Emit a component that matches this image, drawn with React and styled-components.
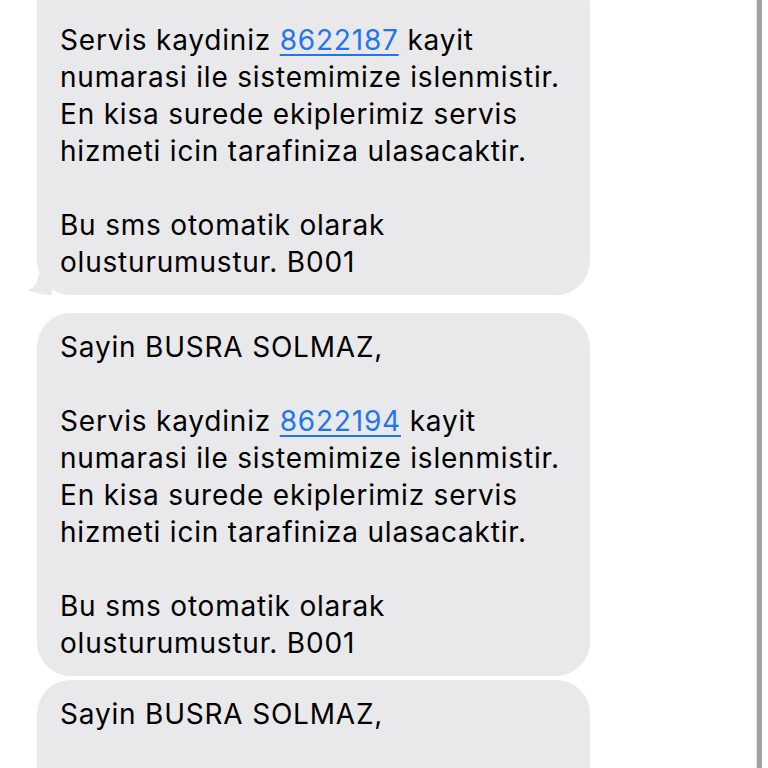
import React from 'react';
import styled, { createGlobalStyle } from 'styled-components';

const GlobalStyle = createGlobalStyle`
  html, body {
    margin: 0;
    padding: 0;
    background: #ffffff;
    overflow: hidden;
  }
  body {
    font-family: Inter, "Open Sans", "Liberation Sans", sans-serif;
    -webkit-font-smoothing: antialiased;
  }
`;

const messages = [
  { id: 1, number: '8622187', tail: true, cutTop: true },
  { id: 2, number: '8622194' },
  { id: 3, number: null },
];

function Tail() {
  return (
    <Styled.Tail viewBox="0 0 24 20" width="24" height="20">
      <path d="M24 0 L24 20 C16 20 7 18 0 15 C6 13 10 8 10 0 Z" fill="#e9e9eb" />
    </Styled.Tail>
  );
}

function Message({ number, tail, cutTop }) {
  return (
    <Styled.Bubble $tail={tail} $cutTop={cutTop}>
      {!cutTop && (
        <>
          <Styled.Line>Sayin BUSRA SOLMAZ,</Styled.Line>
          <Styled.Blank />
        </>
      )}
      {number && (
        <>
          <Styled.Line>
            Servis kaydiniz <Styled.Link href="#">{number}</Styled.Link> kayit
          </Styled.Line>
          <Styled.Line>numarasi ile sistemimize islenmistir.</Styled.Line>
          <Styled.Line>En kisa surede ekiplerimiz servis</Styled.Line>
          <Styled.Line>hizmeti icin tarafiniza ulasacaktir.</Styled.Line>
          <Styled.Blank />
          <Styled.Line>Bu sms otomatik olarak</Styled.Line>
          <Styled.Line>olusturumustur. B001</Styled.Line>
        </>
      )}
      {!number && <Styled.Blank />}
      {tail && <Tail />}
    </Styled.Bubble>
  );
}

export default function App() {
  return (
    <Styled.Screen>
      <GlobalStyle />
      <Styled.Thread>
        {messages.map((m) => (
          <Message key={m.id} number={m.number} tail={m.tail} cutTop={m.cutTop} />
        ))}
      </Styled.Thread>
      <Styled.Edge />
    </Styled.Screen>
  );
}

const Styled = {
  Screen: styled.div`
    display: flex;
    width: 768px;
    height: 768px;
    overflow: hidden;
    background: #ffffff;
  `,
  Thread: styled.div`
    width: 757px;
    display: flex;
    flex-direction: column;
    gap: 4px;
    margin-top: -30px;
    padding-left: 37px;
    box-sizing: border-box;
  `,
  Bubble: styled.div`
    position: relative;
    flex-shrink: 0;
    width: 553px;
    box-sizing: border-box;
    padding: ${({ $cutTop }) => ($cutTop ? '52px' : '16px')} 20px 14px 23px;
    background: #e9e9eb;
    border-radius: 34px;
    margin-bottom: ${({ $tail }) => ($tail ? '14px' : '0')};
    color: #000000;
    font-size: 28px;
    line-height: 37px;
    letter-spacing: 0.8px;
  `,
  Line: styled.div`
    white-space: nowrap;
  `,
  Blank: styled.div`
    height: 37px;
  `,
  Link: styled.a`
    color: #1f76f0;
    text-decoration: underline;
    text-decoration-thickness: 1.5px;
    text-underline-offset: 4px;
  `,
  Tail: styled.svg`
    position: absolute;
    left: -9px;
    bottom: 0;
  `,
  Edge: styled.div`
    width: 5px;
    height: 100%;
    background: #a2a2a2;
    box-shadow: -1px 0 0 #e4e4e4;
  `,
};
